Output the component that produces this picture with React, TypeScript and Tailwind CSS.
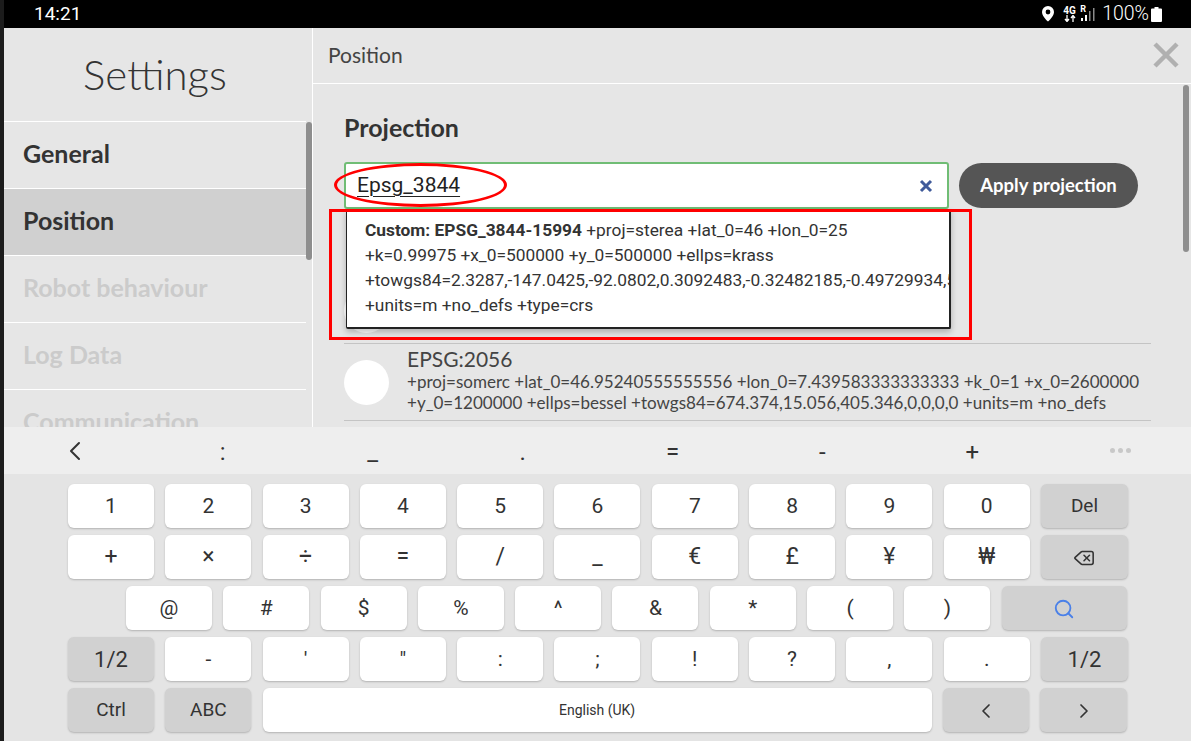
import { ChevronLeft, ChevronRight, Delete, Search } from 'lucide-react'
import type { ReactNode } from 'react'

const menu = [
  { label: 'General', className: 'text-[#333]' },
  { label: 'Position', className: 'text-[#333] bg-[#d0d0d0]' },
  { label: 'Robot behaviour', className: 'text-[#cbcbcb]' },
  { label: 'Log Data', className: 'text-[#cbcbcb]' },
  { label: 'Communication', className: 'text-[#cbcbcb]' },
]

const toolbar = [':', '_', '.', '=', '-', '+']
const row1 = ['1', '2', '3', '4', '5', '6', '7', '8', '9', '0']
const row2 = ['+', '×', '÷', '=', '/', '_', '€', '£', '¥', '₩']
const row3 = ['@', '#', '$', '%', '^', '&', '*', '(', ')']
const row4 = ['-', "'", '"', ':', ';', '!', '?', ',', '.']

const Key = ({ children, dark, className = 'w-[86px]' }: { children: ReactNode; dark?: boolean; className?: string }) => (
  <div
    className={`${className} h-[44px] shrink-0 flex items-center justify-center pt-[1px] rounded-[6px] shadow-[0_1px_2px_rgba(0,0,0,0.22)] text-[#333] ${
      dark ? 'bg-[#d1d1d1]' : 'bg-white'
    }`}
  >
    {children}
  </div>
)

const StatusIcons = () => (
  <div className="flex items-center text-white">
    <svg width="14" height="16" viewBox="0 0 14 16" className="mr-[8px]">
      <path
        fill="#fff"
        fillRule="evenodd"
        d="M7 0a6 6 0 0 1 6 6c0 3.600-3.600 7.400-6 9.600C4.600 13.400 1 9.600 1 6a6 6 0 0 1 6-6zm0 3.600a2.400 2.400 0 1 0 0 4.800 2.400 2.400 0 0 0 0-4.800z"
      />
    </svg>
    <div className="w-[13px] mr-[4px] flex flex-col items-center leading-none">
      <span className="text-[10px] font-bold leading-[9px]">4G</span>
      <svg width="12" height="7" viewBox="0 0 12 7">
        <path d="M3 0v6M1 4l2 2.500L5 4M9 7V1M7 3l2-2.500L11 3" stroke="#fff" strokeWidth="1.300" fill="none" />
      </svg>
    </div>
    <div className="relative w-[16px] h-[16px] mr-[6px]">
      <span className="absolute left-0 top-[-1px] text-[9px] font-bold leading-[9px]">R</span>
      <svg width="16" height="16" viewBox="0 0 16 16" className="absolute inset-0">
        <rect x="1" y="12" width="2" height="3" fill="#fff" />
        <rect x="5" y="9" width="2" height="6" fill="#fff" />
        <rect x="9" y="5" width="1.500" height="10" fill="#8a8a8a" />
        <rect x="13" y="2" width="1.500" height="13" fill="#8a8a8a" />
      </svg>
    </div>
    <span className="text-[19.500px] font-[Roboto,sans-serif] font-light mr-[2px]">100%</span>
    <svg width="11" height="15" viewBox="0 0 11 15">
      <path fill="#fff" d="M3.500 0h4v1.500H10a1 1 0 0 1 1 1V14a1 1 0 0 1-1 1H1a1 1 0 0 1-1-1V2.500a1 1 0 0 1 1-1h2.500z" />
    </svg>
  </div>
)

export default function App() {
  return (
    <div className="w-[1191px] h-[741px] overflow-hidden flex bg-[#1c1c1c] font-['Lato',sans-serif]">
      <div className="w-1 shrink-0" />
      <div className="w-[1187px] flex flex-col">
        <div className="h-[28px] shrink-0 bg-black flex items-center justify-between pl-[30px] pr-[29px] font-[Roboto,sans-serif]">
          <span className="text-[19px] text-white">14:21</span>
          <StatusIcons />
        </div>

        <div className="flex-1 min-h-0 flex bg-[#e6e6e6] overflow-hidden">
          {/* left menu */}
          <aside className="w-[308px] shrink-0 flex flex-col">
            <div className="h-[93px] shrink-0 flex items-center justify-center text-[42px] font-light text-[#333] pb-[1px] pr-[6px]">
              Settings
            </div>
            <div className="relative flex-1 min-h-0">
              {menu.map((item) => (
                <div
                  key={item.label}
                  className={`h-[67px] w-[302px] border-t border-white flex items-center pl-[19px] pb-[2px] text-[25px] font-bold ${item.className}`}
                >
                  {item.label}
                </div>
              ))}
              <div className="absolute right-0 top-[1px] w-[6px] h-[138px] rounded-[3px] bg-[#8e8e8e]" />
            </div>
          </aside>

          {/* right panel */}
          <main className="relative flex-1 border-l border-white flex flex-col">
            <div className="h-[56px] shrink-0 border-b border-white flex items-center justify-between pl-[15px] pr-[12px] pb-[2px]">
              <span className="text-[21px] text-[#444]">Position</span>
              <svg width="26" height="26" viewBox="0 0 26 26">
                <path d="M2 2l22 22M24 2L2 24" stroke="#b0b0b0" strokeWidth="4.500" fill="none" />
              </svg>
            </div>

            <div className="relative pl-[31px] pt-[25px]">
              <h2 className="text-[25px] leading-[36px] font-bold text-[#333]">Projection</h2>

              <div className="relative mt-[17px] flex gap-[10px] items-center">
                <div className="w-[605px] h-[47px] bg-white border-2 border-[#70bd75] rounded-[3px] flex items-center justify-between pl-[11px] pr-[14px]">
                  <span className="font-[Roboto,sans-serif] text-[21px] text-[#222] underline underline-offset-[4px] decoration-[1px]">
                    Epsg_3844
                  </span>
                  <svg width="14" height="14" viewBox="0 0 14 14">
                    <path d="M2 2l10 10M12 2L2 12" stroke="#3f5a9a" strokeWidth="3" fill="none" />
                  </svg>
                </div>
                <button className="w-[179px] h-[45px] rounded-full bg-[#555] text-white text-[18.500px] font-bold">
                  Apply projection
                </button>

                {/* dropdown */}
                <div className="absolute left-[2px] top-[47px] z-10 w-[605px] h-[120px] overflow-hidden bg-white border-l border-b-2 border-r-2 border-[#222] rounded-b-[2px] shadow-[0_3px_6px_rgba(0,0,0,0.25)] pl-[18px] pt-[9px] font-[Roboto,sans-serif] text-[17.330px] leading-[25px] text-[#333] whitespace-nowrap">
                  <div>
                    <b>Custom: EPSG_3844-15994</b> +proj=sterea +lat_0=46 +lon_0=25
                  </div>
                  <div>+k=0.99975 +x_0=500000 +y_0=500000 +ellps=krass</div>
                  <div>+towgs84=2.3287,-147.0425,-92.0802,0.3092483,-0.32482185,-0.49729934,5.68906266</div>
                  <div>+units=m +no_defs +type=crs</div>
                </div>

                {/* red annotations */}
                <div className="absolute left-[-10px] top-[1px] z-20 w-[173px] h-[44px] border-[3px] border-[#ff0000] rounded-[50%]" />
                <div className="absolute left-[-15px] top-[47px] z-20 w-[643px] h-[131px] border-[3px] border-[#ff0000]" />
              </div>

              <div className="w-[807px] mt-[59px] h-[76px] border-b border-[#c4c4c4] flex items-end pb-[10px]">
                <div className="w-[45px] h-[45px] rounded-full bg-white" />
              </div>

              <div className="w-[807px] h-[77px] border-b border-[#c4c4c4] flex items-center gap-[18px]">
                <div className="w-[45px] h-[45px] rounded-full bg-white shrink-0" />
                <div className="text-[#444] pb-[5px]">
                  <div className="text-[21px] leading-[24px]">EPSG:2056</div>
                  <div className="text-[17.050px] leading-[21px] whitespace-nowrap">
                    +proj=somerc +lat_0=46.95240555555556 +lon_0=7.439583333333333 +k_0=1 +x_0=2600000
                  </div>
                  <div className="text-[17.050px] leading-[21px] whitespace-nowrap">
                    +y_0=1200000 +ellps=bessel +towgs84=674.374,15.056,405.346,0,0,0,0 +units=m +no_defs
                  </div>
                </div>
              </div>
            </div>

            <div className="absolute right-[2px] top-[57px] w-[6px] h-[167px] rounded-[3px] bg-[#8e8e8e]" />
          </main>
        </div>

        {/* keyboard */}
        <div className="h-[314px] shrink-0 bg-[#e4e4e4] font-[Roboto,sans-serif]">
          <div className="h-[47px] bg-[#eeeeee] flex items-center text-[#333]">
            <div className="w-[142px] flex justify-center">
              <ChevronLeft size={32} strokeWidth={1.500} className="text-[#333]" />
            </div>
            <div className="w-[2px]" />
            {toolbar.map((t, i) => (
              <div key={i} className="w-[150.200px] text-center text-[24px] leading-none pt-[3px]">
                {t}
              </div>
            ))}
            <div className="w-[144px] flex justify-center gap-[3px] pl-[2px]">
              <i className="w-[5px] h-[5px] rounded-full bg-[#c8c8c8]" />
              <i className="w-[5px] h-[5px] rounded-full bg-[#c8c8c8]" />
              <i className="w-[5px] h-[5px] rounded-full bg-[#c8c8c8]" />
            </div>
          </div>

          <div className="pl-[64px] pt-[10px] flex flex-col gap-[7px] text-[21px]">
            <div className="flex gap-[11.300px]">
              {row1.map((k) => (
                <Key key={k}>{k}</Key>
              ))}
              <Key dark className="w-[87px] text-[19px]">
                Del
              </Key>
            </div>
            <div className="flex gap-[11.300px] text-[23px]">
              {row2.map((k) => (
                <Key key={k}>{k}</Key>
              ))}
              <Key dark className="w-[87px]">
                <Delete size={22} strokeWidth={1.700} className="text-[#333]" />
              </Key>
            </div>
            <div className="flex gap-[11.300px] pl-[58px]">
              {row3.map((k) => (
                <Key key={k}>{k}</Key>
              ))}
              <Key dark className="w-[125px]">
                <Search size={22} strokeWidth={2} className="text-[#4a80e8]" />
              </Key>
            </div>
            <div className="flex gap-[11.300px]">
              <Key dark className="w-[86px] text-[22px]">
                1/2
              </Key>
              {row4.map((k) => (
                <Key key={k}>{k}</Key>
              ))}
              <Key dark className="w-[87px] text-[22px]">
                1/2
              </Key>
            </div>
            <div className="flex gap-[11.300px] text-[19px]">
              <Key dark>Ctrl</Key>
              <Key dark>ABC</Key>
              <Key className="w-[669px] text-[14px]">English (UK)</Key>
              <Key dark>
                <ChevronLeft size={24} strokeWidth={1.700} />
              </Key>
              <Key dark className="w-[87px]">
                <ChevronRight size={24} strokeWidth={1.700} />
              </Key>
            </div>
          </div>
        </div>
      </div>
    </div>
  )
}
